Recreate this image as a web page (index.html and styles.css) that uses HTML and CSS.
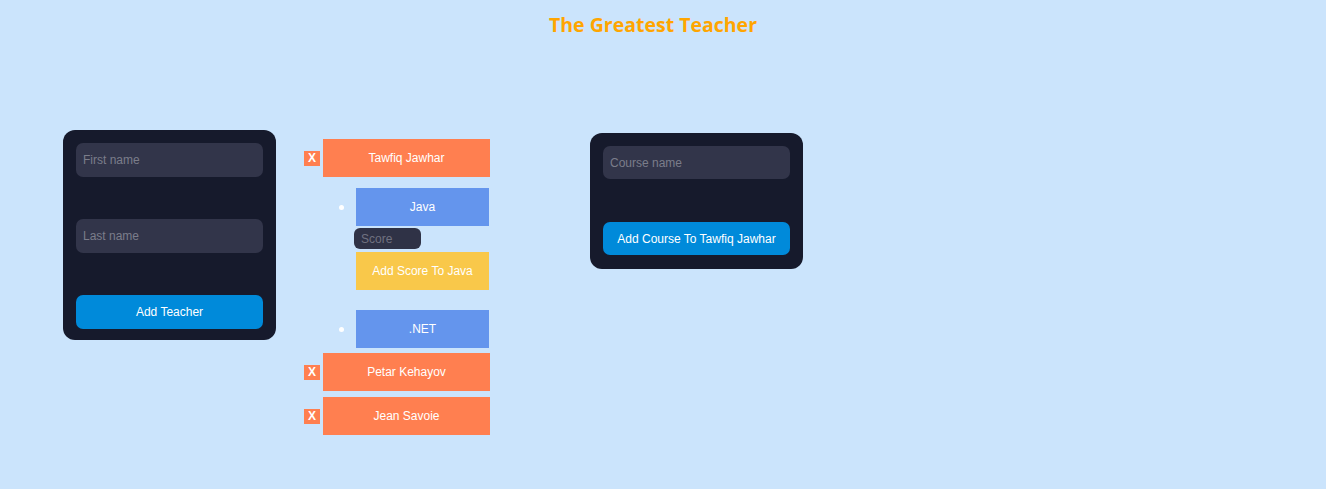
FILE: index.html
```html
<!DOCTYPE html>
<html lang="en">
<head>
<meta charset="utf-8">
<title>The Greatest Teacher</title>
<link rel="stylesheet" href="styles.css">
</head>
<body>
<header class="header">
  <h1 class="title">The Greatest Teacher</h1>
</header>
<main class="main">
  <form class="card card-teacher">
    <input class="field" type="text" placeholder="First name">
    <input class="field" type="text" placeholder="Last name">
    <button class="btn-primary" type="button">Add Teacher</button>
  </form>

  <ul class="teachers">
    <li class="teacher">
      <div class="teacher-row">
        <button class="remove" type="button">X</button>
        <div class="teacher-name">Tawfiq Jawhar</div>
      </div>
      <ul class="courses">
        <li class="course">
          <div class="course-row"><span class="dot"></span><div class="course-name">Java</div></div>
          <input class="score" type="text" placeholder="Score">
          <button class="btn-score" type="button">Add Score To Java</button>
        </li>
        <li class="course course-next">
          <div class="course-row"><span class="dot"></span><div class="course-name">.NET</div></div>
        </li>
      </ul>
    </li>
    <li class="teacher teacher-second">
      <div class="teacher-row">
        <button class="remove" type="button">X</button>
        <div class="teacher-name">Petar Kehayov</div>
      </div>
    </li>
    <li class="teacher teacher-third">
      <div class="teacher-row">
        <button class="remove" type="button">X</button>
        <div class="teacher-name">Jean Savoie</div>
      </div>
    </li>
  </ul>

  <form class="card card-course">
    <input class="field field-course" type="text" placeholder="Course name">
    <button class="btn-primary btn-course" type="button">Add Course To Tawfiq Jawhar</button>
  </form>
</main>
</body>
</html>
```

FILE: styles.css
```css
* { box-sizing: border-box; }

html, body {
  margin: 0;
  padding: 0;
}

body {
  background: #cbe4fc;
  font-family: "Liberation Sans", Arial, sans-serif;
  font-size: 12px;
  min-height: 489px;
}

.header {
  padding: 12px 20px 0 0;
  text-align: center;
}

.title {
  margin: 0;
  font-family: "Open Sans", "DejaVu Sans", sans-serif;
  font-weight: 700;
  font-size: 19.5px;
  line-height: 26px;
  color: #ffa500;
}

.main {
  display: flex;
  align-items: flex-start;
  padding: 92px 0 0 63px;
}

.card {
  width: 213px;
  background: #161a2c;
  border-radius: 12px;
  display: flex;
  flex-direction: column;
  margin: 0;
}

.card-teacher {
  padding: 13px 13px 11px;
  gap: 42px;
}

.card-course {
  margin-left: 100px;
  margin-top: 3px;
  padding: 13px 13px 14px;
  gap: 43px;
}

.field {
  height: 34px;
  border: none;
  outline: none;
  border-radius: 7px;
  background: #32354a;
  color: #d0d0d8;
  padding: 0 7px;
  font-family: "Liberation Sans", Arial, sans-serif;
  font-size: 12px;
}

.field::placeholder { color: #7b7d8a; }

.field-course { height: 33px; }

.btn-primary {
  height: 34px;
  border: none;
  border-radius: 7px;
  background: #008ada;
  color: #ffffff;
  font-family: "Liberation Sans", Arial, sans-serif;
  font-size: 12px;
  padding: 0;
}

.btn-course { height: 33px; }

.teachers {
  list-style: none;
  margin: 9px 0 0 28px;
  padding: 0;
  width: 186px;
}

.teacher-second { margin-top: 5px; }
.teacher-third { margin-top: 6px; }

.teacher-row {
  display: flex;
  align-items: center;
  gap: 3px;
}

.remove {
  width: 16px;
  height: 15px;
  border: none;
  padding: 0;
  background: #ff7f50;
  color: #ffffff;
  font-family: "Liberation Sans", Arial, sans-serif;
  font-size: 12px;
  font-weight: 700;
  line-height: 15px;
}

.teacher-name {
  width: 167px;
  height: 38px;
  background: #ff7f50;
  color: #ffffff;
  display: flex;
  align-items: center;
  justify-content: center;
}

.courses {
  list-style: none;
  margin: 11px 0 0 0;
  padding: 0 0 0 52px;
}

.course { display: flex; flex-direction: column; align-items: flex-start; }

.course-next { margin-top: 20px; }

.course-row {
  display: flex;
  align-items: center;
  gap: 12px;
  margin-left: -17px;
}

.dot {
  width: 5px;
  height: 5px;
  border-radius: 50%;
  background: #ffffff;
}

.course-name {
  width: 133px;
  height: 38px;
  background: #6495ed;
  color: #ffffff;
  display: flex;
  align-items: center;
  justify-content: center;
}

.score {
  width: 67px;
  height: 21px;
  margin: 2px 0 0 -2px;
  border: none;
  outline: none;
  border-radius: 6px;
  background: #2f3246;
  color: #d0d0d8;
  padding: 0 7px;
  font-family: "Liberation Sans", Arial, sans-serif;
  font-size: 12px;
}

.score::placeholder { color: #6f7180; }

.btn-score {
  width: 133px;
  height: 38px;
  margin-top: 3px;
  border: none;
  padding: 0;
  background: #f9c84a;
  color: #ffffff;
  font-family: "Liberation Sans", Arial, sans-serif;
  font-size: 12px;
}
```
